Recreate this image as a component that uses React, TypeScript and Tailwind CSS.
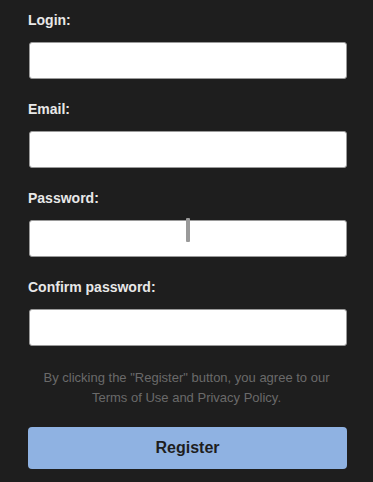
import React from "react";

const fields = ["Login:", "Email:", "Password:", "Confirm password:"];

export default function App() {
  return (
    <div className="w-[373px] h-[482px] bg-[#1e1e1e] overflow-hidden relative" style={{ fontFamily: '"Liberation Sans", Arial, sans-serif' }}>
      <div className="px-[28px] pt-[12px] flex flex-col">
        {fields.map((f, i) => (
          <div key={f} className="flex flex-col">
            <label className="text-[14px] leading-[16px] font-bold text-[#e8e8e8]">{f}</label>
            <div className="mt-[14px] h-[37px] w-[318px] ml-[1px] bg-white rounded-[3px] border border-[#9a9a9a] relative">
              {i === 2 && (
                <div className="absolute left-[156px] top-[-3px] w-[4px] h-[24px] bg-[#9a9a9a] rounded-[1px]" />
              )}
            </div>
            {i < 3 && <div className="h-[22px]" />}
          </div>
        ))}
        <p className="mt-[22px] text-center text-[13px] leading-[20px] text-[#6a6a6a] px-[12px]">
          By clicking the "Register" button, you agree to our Terms of Use and Privacy Policy.
        </p>
        <button className="mt-[19px] h-[42px] w-[319px] rounded-[4px] bg-[#8fb2e2] text-[16px] font-bold text-[#1e1e1e]">
          Register
        </button>
      </div>
    </div>
  );
}
